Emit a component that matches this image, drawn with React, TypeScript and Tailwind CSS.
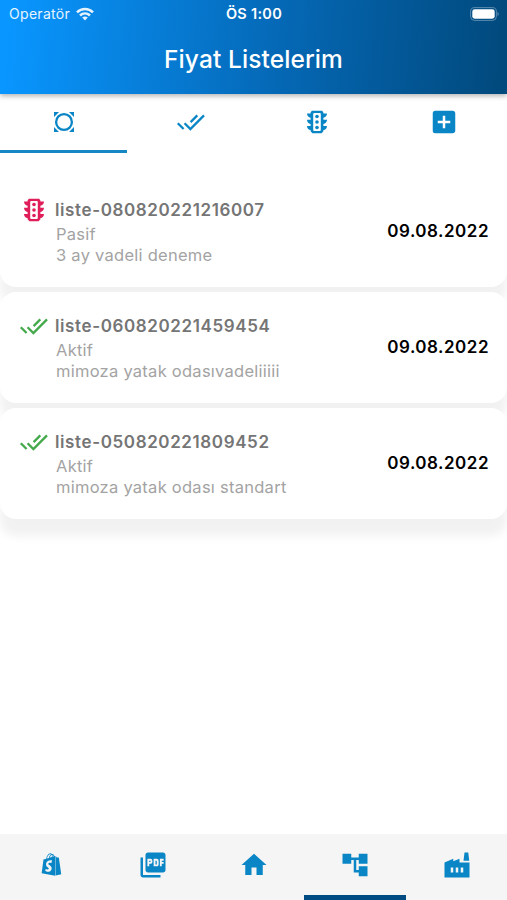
import type { ReactNode } from 'react'
import { MdAccountTree, MdAddBox, MdHome, MdPictureAsPdf } from 'react-icons/md'
import { FaShopify } from 'react-icons/fa'

interface PriceList {
  name: string
  active: boolean
  description: string
  date: string
}

const lists: PriceList[] = [
  { name: 'liste-080820221216007', active: false, description: '3 ay vadeli deneme', date: '09.08.2022' },
  { name: 'liste-060820221459454', active: true, description: 'mimoza yatak odasıvadeliiiii', date: '09.08.2022' },
  { name: 'liste-050820221809452', active: true, description: 'mimoza yatak odası standart', date: '09.08.2022' },
]

function WifiIcon() {
  return (
    <svg width="18" height="14" viewBox="0 0 18 14" fill="none" stroke="currentColor" strokeWidth="2.5">
      <path d="M1 5.4c4.6-4.5 11.4-4.5 16 0M4 8.5c3-2.8 7-2.8 10 0" />
      <path d="M6.2 10.6c1.7-1.5 3.9-1.5 5.6 0L9 13.6z" fill="currentColor" stroke="none" />
    </svg>
  )
}

function CircleFrameIcon() {
  return (
    <svg width="30" height="30" viewBox="0 0 30 30" fill="currentColor">
      <circle cx="15" cy="15" r="7.9" fill="none" stroke="currentColor" strokeWidth="2.3" />
      <path d="M5 5h5L5 10zM25 5v5L20 5zM5 25v-5L10 25zM25 25h-5l5-5z" />
    </svg>
  )
}

function DoubleCheckIcon() {
  return (
    <svg width="30" height="30" viewBox="0 0 30 30" fill="none" stroke="currentColor" strokeWidth="2.3">
      <path d="M1.8 16.2l5.8 5.8M8.6 16.2l5.8 5.8L28 8.4M14.6 15.1l6.7-6.7" />
    </svg>
  )
}

function TrafficIcon() {
  return (
    <svg width="30" height="30" viewBox="0 0 30 30" fill="currentColor">
      <path d="M9.8 3.8h10.4l1.2 1.8v.9H25c0 2.2-1.4 3.7-3.6 4.2v2H25c0 2.2-1.4 3.7-3.6 4.2v2H25c0 2.2-1.4 3.7-3.6 4.2v1.2l-1.8 1.9h-9.2l-1.8-1.9v-1.2C6.4 22.6 5 21.1 5 18.9h3.6v-2C6.4 16.4 5 14.9 5 12.7h3.6v-2C6.4 10.2 5 8.7 5 6.5h3.6v-.9z" />
      <rect x="11.2" y="6" width="7.6" height="18" rx="1" fill="white" />
      <circle cx="15" cy="9.5" r="1.8" />
      <circle cx="15" cy="15" r="1.8" />
      <circle cx="15" cy="20.5" r="1.8" />
    </svg>
  )
}

function FactoryIcon() {
  return (
    <svg width="30" height="30" viewBox="0 0 24 24" fill="currentColor">
      <path
        fillRule="evenodd"
        d="M22 10v12H2V10l7-3v2l5-2v3h8zM17.2 8.5L18 2h3l.8 6.5h-4.6zM11 18h2v-4h-2v4zM7 18h2v-4H7v4zM17 14h-2v4h2v-4z"
      />
    </svg>
  )
}

function StatusBar() {
  return (
    <div className="grid h-7 grid-cols-3 items-center pl-[9px] pr-2 text-sm text-white">
      <div className="flex items-center gap-1.5 opacity-90">
        <span className="tracking-[0.3px]">Operatör</span>
        <WifiIcon />
      </div>
      <span className="text-center text-[14.5px] font-semibold tracking-[0.3px]">ÖS 1:00</span>
      <svg className="justify-self-end" width="29" height="14" viewBox="0 0 29 14" fill="none">
        <rect x="0.6" y="0.6" width="25.8" height="12.8" rx="4" stroke="white" strokeOpacity="0.35" />
        <rect x="2.3" y="2.3" width="22.4" height="9.4" rx="2.4" fill="white" />
        <path d="M27.6 5v4c1.3-.6 1.3-3.4 0-4z" fill="white" fillOpacity="0.5" />
      </svg>
    </div>
  )
}

function Tab({ active, children }: { active?: boolean; children: ReactNode }) {
  return (
    <button
      className={`flex flex-1 items-center justify-center border-b-[3px] pl-px text-[#0a86c6] ${
        active ? 'border-[#1687c4]' : 'border-transparent'
      }`}
    >
      {children}
    </button>
  )
}

function ListCard({ list }: { list: PriceList }) {
  return (
    <li className="flex h-[111px] items-center rounded-2xl bg-white pl-[19px] pr-[18px] shadow-[0_17px_10px_rgba(0,0,0,0.055)]">
      <div className={`mr-1.5 self-start pt-[19px] ${list.active ? 'text-[#43a94a]' : 'text-[#e01e5a]'}`}>
        {list.active ? <DoubleCheckIcon /> : <TrafficIcon />}
      </div>
      <div className="flex-1">
        <h2 className="pb-px text-[17px] font-semibold leading-[25px] tracking-[0.61px] text-[#757575]">{list.name}</h2>
        <p className="-mb-px pl-px text-[16.5px] leading-[21px] tracking-[0.26px] text-[#a3a3a3]">
          {list.active ? 'Aktif' : 'Pasif'}
          <br />
          {list.description}
        </p>
      </div>
      <time className="text-[17px] font-semibold tracking-[0.5px] text-black">{list.date}</time>
    </li>
  )
}

function NavItem({ active, children }: { active?: boolean; children: ReactNode }) {
  return (
    <button
      className={`flex flex-1 items-center justify-center border-b-[5px] pl-px text-[#0a86c6] ${
        active ? 'border-[#004b82]' : 'border-transparent'
      }`}
    >
      {children}
    </button>
  )
}

export default function App() {
  return (
    <div className="flex h-[900px] w-[507px] flex-col overflow-hidden bg-white font-[Inter,sans-serif]">
      <header className="relative z-10 h-[94px] shrink-0 bg-[linear-gradient(95deg,#0996ff_2%,#0569b7_54%,#014a7e_98%)] shadow-[0_2px_5px_rgba(0,0,0,0.3)]">
        <StatusBar />
        <h1 className="pt-[13px] text-center text-[24.5px] font-medium leading-9 tracking-[0.1px] text-white">
          Fiyat Listelerim
        </h1>
      </header>

      <nav className="flex h-[59px] shrink-0">
        <Tab active>
          <CircleFrameIcon />
        </Tab>
        <Tab>
          <DoubleCheckIcon />
        </Tab>
        <Tab>
          <TrafficIcon />
        </Tab>
        <Tab>
          <MdAddBox size={30} />
        </Tab>
      </nav>

      <main className="flex-1 pt-[23px]">
        <ul className="flex flex-col gap-[5px]">
          {lists.map(list => (
            <ListCard key={list.name} list={list} />
          ))}
        </ul>
      </main>

      <footer className="flex h-[66px] shrink-0 bg-[#f5f5f5]">
        <NavItem>
          <FaShopify size={23} />
        </NavItem>
        <NavItem>
          <MdPictureAsPdf size={30} />
        </NavItem>
        <NavItem>
          <MdHome size={30} />
        </NavItem>
        <NavItem active>
          <MdAccountTree size={30} />
        </NavItem>
        <NavItem>
          <FactoryIcon />
        </NavItem>
      </footer>
    </div>
  )
}
